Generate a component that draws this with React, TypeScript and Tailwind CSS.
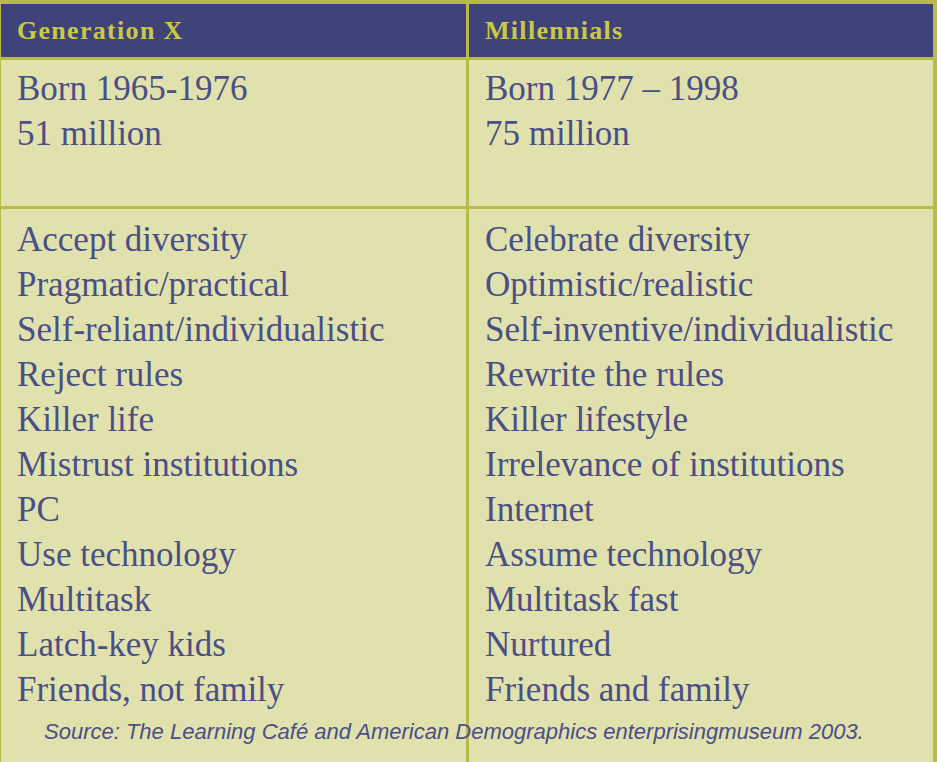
const rows: [string, string][] = [
  ["Accept diversity", "Celebrate diversity"],
  ["Pragmatic/practical", "Optimistic/realistic"],
  ["Self-reliant/individualistic", "Self-inventive/individualistic"],
  ["Reject rules", "Rewrite the rules"],
  ["Killer life", "Killer lifestyle"],
  ["Mistrust institutions", "Irrelevance of institutions"],
  ["PC", "Internet"],
  ["Use technology", "Assume technology"],
  ["Multitask", "Multitask fast"],
  ["Latch-key kids", "Nurtured"],
  ["Friends, not family", "Friends and family"],
];

const serif = "font-['Liberation_Serif',serif]";

export default function App() {
  return (
    <div className="relative h-[762px] w-[937px] overflow-hidden border-t-4 border-r-4 border-l border-[#b8bb4c] bg-[#e1e1ae]">
      {/* header */}
      <div className="grid h-[53px] grid-cols-[468px_1fr] bg-[#3f4379]">
        <div className={`flex items-center border-r-[3px] border-[#b8bb4c] pl-4 text-[26px] font-bold tracking-[1.3px] text-[#c9c944] ${serif}`}>
          Generation X
        </div>
        <div className={`flex items-center pl-4 text-[26px] font-bold tracking-[1.3px] text-[#c9c944] ${serif}`}>
          Millennials
        </div>
      </div>

      {/* born row */}
      <div className={`grid h-[152px] grid-cols-[468px_1fr] border-y-[3px] border-[#b8bb4c] text-[35px] leading-[45px] text-[#4a4f85] ${serif}`}>
        <div className="border-r-[3px] border-[#b8bb4c] pt-[6px] pl-4">
          <div>Born 1965-1976</div>
          <div>51 million</div>
        </div>
        <div className="pt-[6px] pl-4">
          <div>Born 1977 – 1998</div>
          <div>75 million</div>
        </div>
      </div>

      {/* traits */}
      <div className={`grid h-full grid-cols-[468px_1fr] text-[35px] leading-[45px] text-[#4a4f85] ${serif}`}>
        <div className="border-r-[3px] border-[#b8bb4c] pt-[8px] pl-4">
          {rows.map(([a]) => (
            <div key={a}>{a}</div>
          ))}
        </div>
        <div className="pt-[8px] pl-4">
          {rows.map(([, b]) => (
            <div key={b}>{b}</div>
          ))}
        </div>
      </div>

      <div className="absolute top-[711px] left-[43px] font-['Liberation_Sans',sans-serif] text-[22px] italic text-[#4a4f85]">
        Source: The Learning Café and American Demographics enterprisingmuseum 2003.
      </div>
    </div>
  );
}
